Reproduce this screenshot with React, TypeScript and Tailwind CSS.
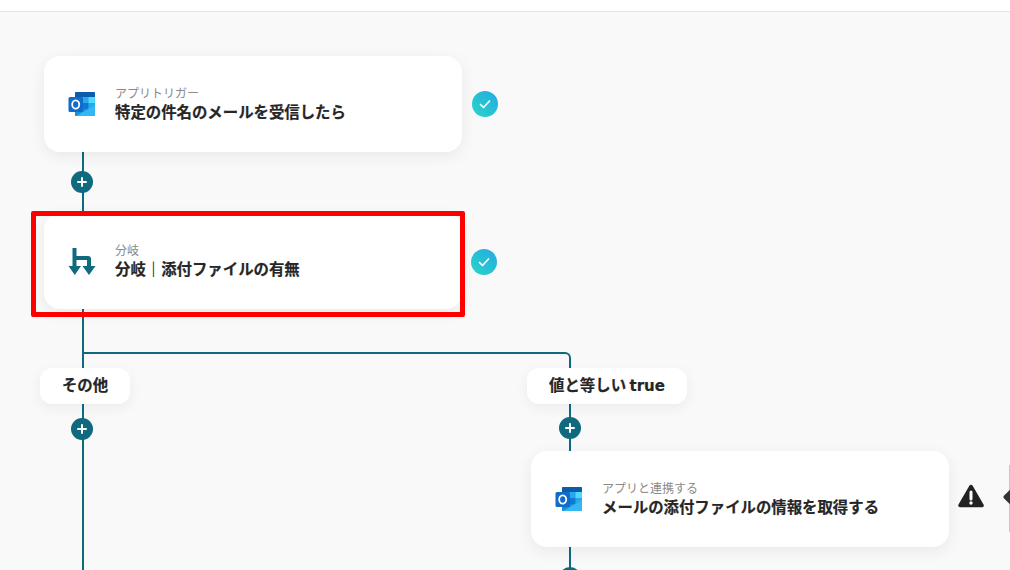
const font = "font-['Noto_Sans_CJK_JP','Noto_Sans',sans-serif]";

function Outlook({ className }: { className: string }) {
  return (
    <svg viewBox="0 0 28 26" className={className}>
      <rect x="7" y="1" width="20" height="24" rx="1.5" fill="#1490df" />
      <path d="M8 1h18a1 1 0 0 1 1 1v4H7V2a1 1 0 0 1 1-1z" fill="#0b5cab" />
      <rect x="7" y="6" width="7" height="6" fill="#0f78d4" />
      <rect x="14" y="6" width="6.5" height="6" fill="#28a8ea" />
      <rect x="20.5" y="6" width="6.5" height="6" fill="#50d9ff" />
      <rect x="7" y="12" width="7" height="6" fill="#0f5fae" />
      <rect x="14" y="12" width="6.5" height="6" fill="#0f78d4" />
      <rect x="20.5" y="12" width="6.5" height="6" fill="#28a8ea" />
      <path d="M7 14l10 6.5L27 14v10a1 1 0 0 1-1 1H8a1 1 0 0 1-1-1z" fill="#1490df" />
      <path d="M8 25l19-11v10a1 1 0 0 1-1 1z" fill="#35b8f1" />
      <rect x="0.5" y="6" width="14.5" height="15" rx="1.5" fill="#0f6cc8" />
      <ellipse cx="7.7" cy="13.5" rx="3.5" ry="4.1" fill="none" stroke="#fff" strokeWidth="1.8" />
    </svg>
  );
}

function Card({ pos, label, title, icon }: { pos: string; label: string; title: string; icon: React.ReactNode }) {
  return (
    <div className={`absolute ${pos} flex items-center rounded-2xl bg-white shadow-[0_4px_16px_rgba(0,0,0,0.07)]`}>
      <div className="flex w-[71px] shrink-0 justify-center pl-[5px]">{icon}</div>
      <div className="flex flex-col">
        <span className="text-[12px] leading-[16px] text-[#8a8a8a]">{label}</span>
        <span className="-mt-[2px] text-[15.4px] font-bold leading-[24px] text-[#262626] [-webkit-text-stroke:0.2px_#262626]">
          {title}
        </span>
      </div>
    </div>
  );
}

function Plus({ pos }: { pos: string }) {
  return (
    <div className={`absolute ${pos} flex h-[22px] w-[22px] items-center justify-center rounded-full bg-[#0f6a80]`}>
      <svg viewBox="0 0 10 10" className="h-[10px] w-[10px]">
        <path d="M5 1v8M1 5h8" stroke="#fff" strokeWidth="2" strokeLinecap="round" />
      </svg>
    </div>
  );
}

function Check({ pos }: { pos: string }) {
  return (
    <div className={`absolute ${pos} flex h-[26px] w-[26px] items-center justify-center rounded-full bg-linear-to-tr from-[#2ad6c6] to-[#27a9e1]`}>
      <svg viewBox="0 0 14 14" className="h-[14px] w-[14px]">
        <path d="M2.5 7.5l3 3 6-6.5" fill="none" stroke="#fff" strokeWidth="1.7" strokeLinecap="round" strokeLinejoin="round" />
      </svg>
    </div>
  );
}

function Pill({ pos, children }: { pos: string; children: React.ReactNode }) {
  return (
    <div className={`absolute ${pos} flex h-9 items-center justify-center rounded-xl bg-white pb-[2px] text-[15.4px] font-bold text-[#262626] shadow-[0_4px_14px_rgba(0,0,0,0.06)] [-webkit-text-stroke:0.2px_#262626]`}>
      {children}
    </div>
  );
}

function Line({ pos }: { pos: string }) {
  return <div className={`absolute ${pos} bg-[#0f6a80]`} />;
}

export default function App() {
  return (
    <div className={`relative h-[570px] w-[1010px] overflow-hidden bg-[#f9f9f9] ${font}`}>
      <div className="h-3 border-b border-[#e4e4e4] bg-white" />

      {/* connectors */}
      <Line pos="left-[82px] top-[150px] h-[420px] w-[2px]" />
      <div className="absolute left-[83px] top-[352px] h-5 w-[488px] rounded-tr-md border-r-2 border-t-2 border-[#0f6a80]" />
      <Line pos="left-[569px] top-[370px] h-[200px] w-[2px]" />

      <Card
        pos="left-[44px] top-[56px] h-[96px] w-[418px]"
        label="アプリトリガー"
        title="特定の件名のメールを受信したら"
        icon={<Outlook className="h-[26px] w-[28px]" />}
      />
      <Check pos="left-[472px] top-[91px]" />
      <Plus pos="left-[71px] top-[171px]" />

      <Card
        pos="left-[44px] top-[213px] h-[96px] w-[418px]"
        label="分岐"
        title="分岐｜添付ファイルの有無"
        icon={
          <svg viewBox="0 -1 28 28" className="h-7 w-7">
            <path d="M6.5 0v20M6.5 10h13.5a1 1 0 0 1 1 1v9" fill="none" stroke="#0f6a80" strokeWidth="4" />
            <path d="M0.5 18h12.5L6.8 27zM14.5 18h13L21 27z" fill="#0f6a80" />
          </svg>
        }
      />
      {/* highlighted step */}
      <div className="absolute left-[31px] top-[211px] h-[106px] w-[434px] rounded-[2px] border-[5px] border-[#ff0000]" />
      <Check pos="left-[471px] top-[249px]" />

      <Pill pos="left-[40px] top-[368px] w-[90px]">その他</Pill>
      <Pill pos="left-[527px] top-[368px] w-[160px]">
        <span>値と等しい <span className="font-['DejaVu_Sans'] text-[15px]">true</span></span>
      </Pill>
      <Plus pos="left-[71px] top-[418px]" />
      <Plus pos="left-[559px] top-[417px]" />

      <Card
        pos="left-[531px] top-[451px] h-[96px] w-[418px]"
        label="アプリと連携する"
        title="メールの添付ファイルの情報を取得する"
        icon={<Outlook className="h-[26px] w-[28px]" />}
      />
      <svg viewBox="0 0 26 24" className="absolute left-[958px] top-[484px] h-6 w-[26px]">
        <path d="M13 2.5L24 21.5H2z" fill="#222" stroke="#222" strokeWidth="3.5" strokeLinejoin="round" />
        <path d="M13 8v7" stroke="#fff" strokeWidth="3" strokeLinecap="round" />
        <circle cx="13" cy="19" r="1.7" fill="#fff" />
      </svg>
      <div className="absolute left-[1009px] top-[465px] h-[67px] w-px bg-[#c8c8c8]" />
      <div className="absolute left-[1006px] top-[489px] h-4 w-4 rotate-45 rounded-[2px] bg-[#333]" />
      <Plus pos="left-[559px] top-[567px]" />
    </div>
  );
}
